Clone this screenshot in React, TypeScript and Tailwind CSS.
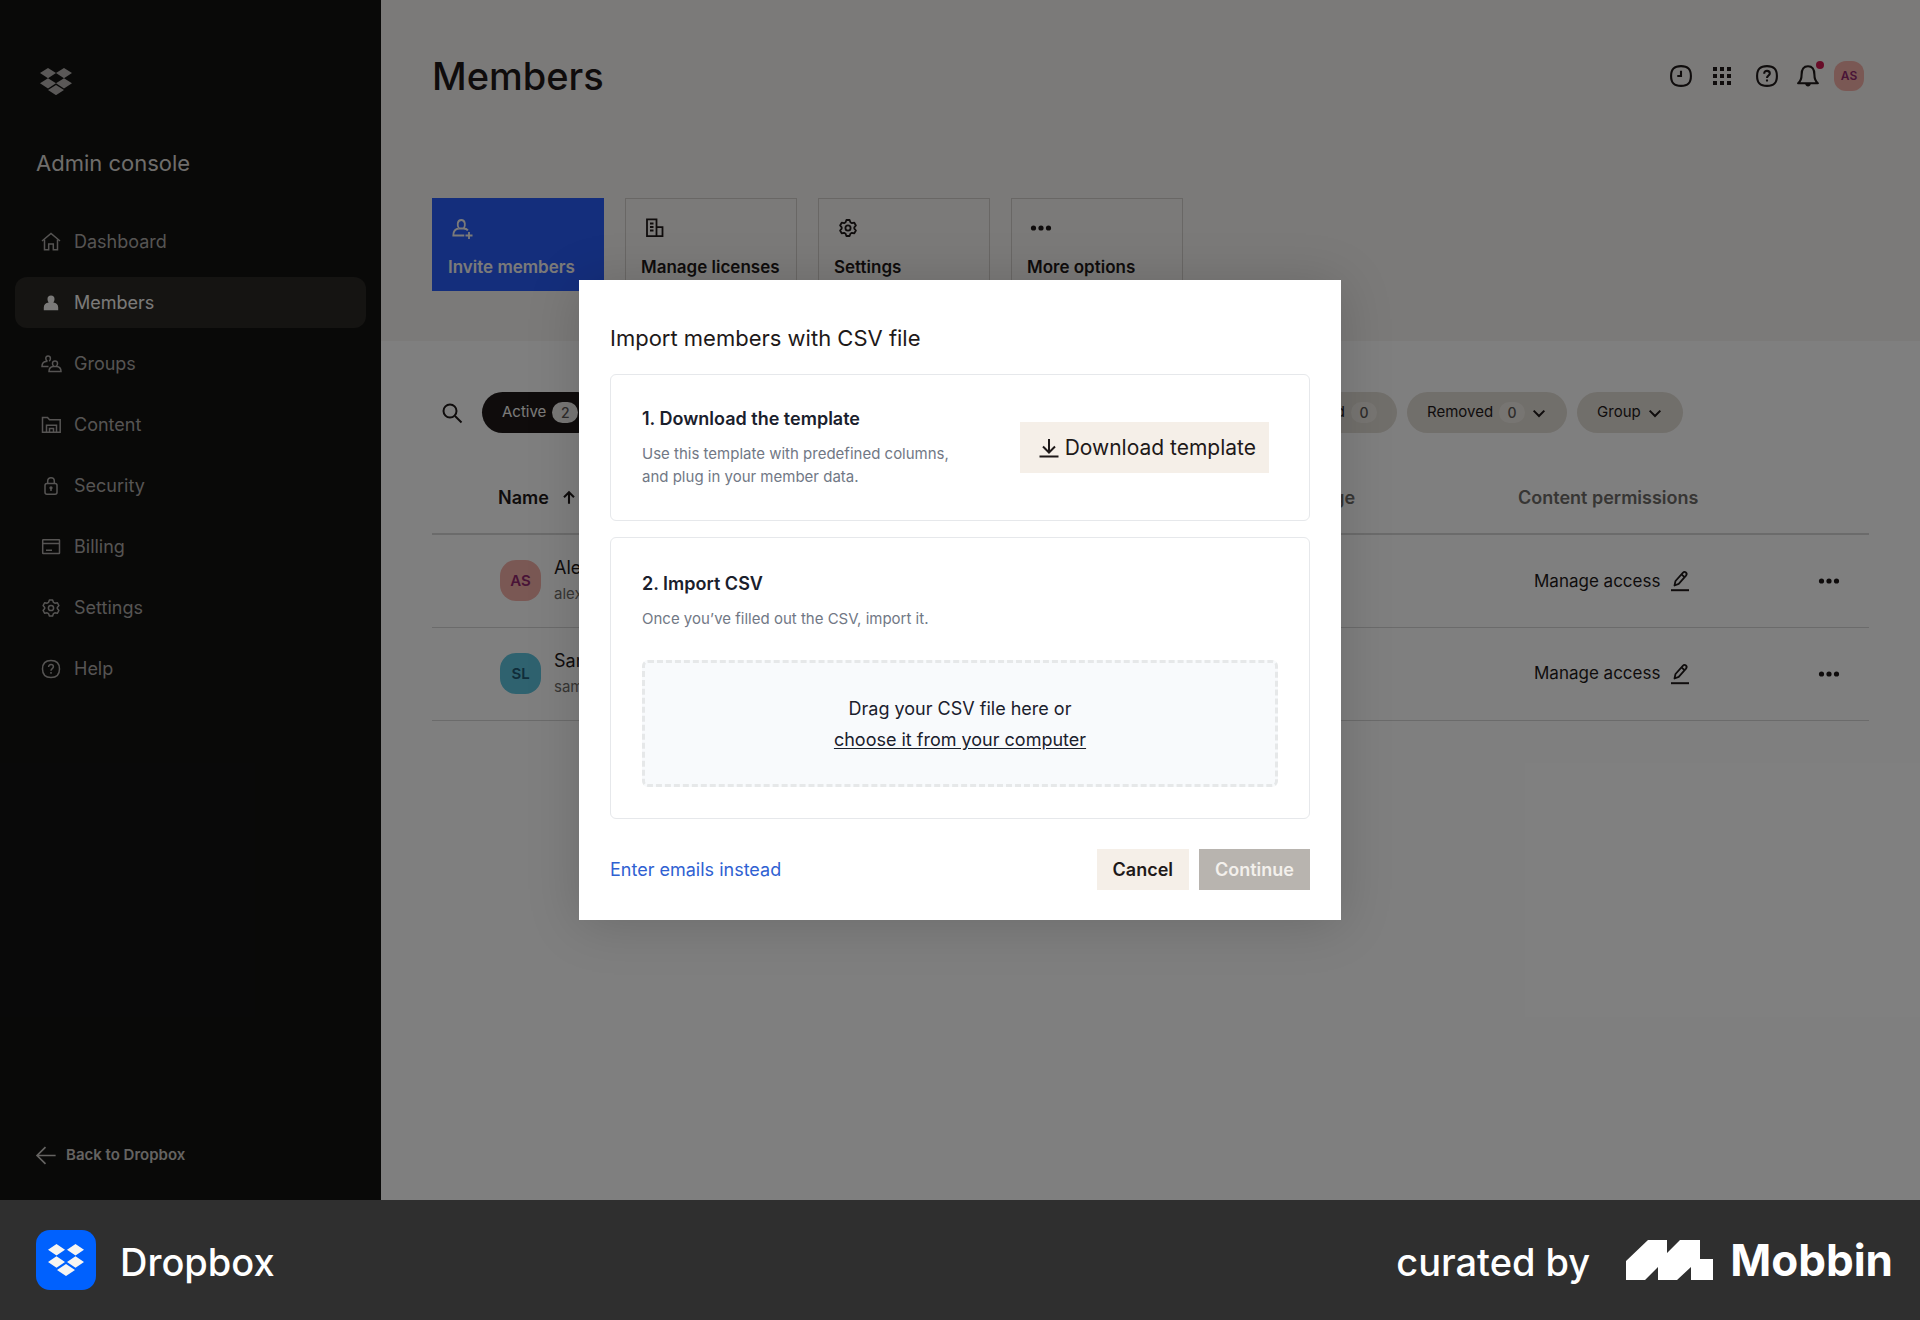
import type { ReactNode } from "react";

function Icon({ children, className = "size-6", sw = 1.5 }: { children: ReactNode; className?: string; sw?: number }) {
  return (
    <svg viewBox="0 0 24 24" className={`shrink-0 ${className}`} fill="none" stroke="currentColor" strokeWidth={sw} aria-hidden="true">
      {children}
    </svg>
  );
}

/* Icon drawings, all on a 24 grid */
const gear = (
  <>
    <circle cx="12" cy="12" r="2.6" />
    <path d="M10.4 4.5h3.2l.8 2.3 1.5.9 2.4-.5 1.6 2.8-1.6 1.9v1.2l1.6 1.9-1.6 2.8-2.4-.5-1.5.9-.8 2.3h-3.2l-.8-2.3-1.5-.9-2.4.5-1.6-2.8 1.6-1.9v-1.2l-1.6-1.9 1.6-2.8 2.4.5 1.5-.9z" strokeLinejoin="round" transform="translate(0 -.5)" />
  </>
);
const help = (
  <>
    <path d="M12 3.5c6 0 8.5 2.5 8.5 8.5s-2.5 8.5-8.5 8.5S3.500 18 3.500 12 6 3.500 12 3.500z" />
    <path d="M9.600 10c0-1.500 1-2.400 2.400-2.400s2.400.9 2.400 2.200c0 1.700-2.400 1.900-2.400 3.900" />
    <path d="M12 15v1.700" />
  </>
);
const dots = (
  <g fill="currentColor" stroke="none">
    <circle cx="4.500" cy="12" r="2.600" />
    <circle cx="12" cy="12" r="2.600" />
    <circle cx="19.500" cy="12" r="2.600" />
  </g>
);
const chevron = <path d="M4 8.500l8 8 8-8" />;
const pencil = (
  <>
    <path d="M6.500 16.500l1-4.500 7.300-8.200c.9-1 2.200-1.100 3.100-.3.900.8.900 2.100.1 3.100L10.700 14.800z" strokeLinejoin="round" />
    <path d="M13.500 5.300l3 2.800" />
    <path d="M3 21.200h18" strokeWidth="2" />
  </>
);

const nav = [
  {
    label: "Dashboard",
    icon: (
      <>
        <path d="M3 11L12 3.500l9 7.500" />
        <path d="M5.500 9.500v10.200h4.200V14h4.600v5.700h4.200V9.500" />
      </>
    ),
  },
  {
    label: "Members",
    icon: (
      <path
        d="M12 4.500c2.300 0 3.500 1.500 3.500 3.500 0 1.500-.5 2.600-1.200 3.500 3 .3 4.900 2.200 4.900 5v2.700H4.800v-2.700c0-2.800 1.900-4.700 4.900-5C9 10.600 8.500 9.500 8.500 8c0-2 1.200-3.500 3.500-3.500z"
        fill="currentColor"
        stroke="none"
      />
    ),
  },
  {
    label: "Groups",
    icon: (
      <>
        <path d="M8.500 9.500C6.500 8.500 5.800 4 9 4s2.800 4 1.200 5.200M9.500 14.500H3c0-3 1.500-5 4.500-5" />
        <path d="M16 9c3.500 0 2.800 4 1.200 5.500h-2.400C13.200 13 12.500 9 16 9zM14.500 14.500c-3 .2-4.500 2-4.500 5h12c0-3-1.500-4.800-4.500-5" />
      </>
    ),
  },
  {
    label: "Content",
    icon: (
      <>
        <path d="M3.500 19.200V4.500h5l2 2.200h10.700v12.500z" />
        <path d="M7.500 19v-6.800h10V19M10.500 19v-3.500h4V19" />
      </>
    ),
  },
  {
    label: "Security",
    icon: (
      <>
        <rect x="6" y="9.500" width="12" height="10.700" rx="2" />
        <path d="M8.700 9.500V7c0-2 1.300-3.200 3.300-3.200s3.300 1.200 3.300 3.200v2.500M12 14v3" />
        <circle cx="12" cy="13.800" r=".9" fill="currentColor" />
      </>
    ),
  },
  {
    label: "Billing",
    icon: (
      <>
        <rect x="3.700" y="4.700" width="16.800" height="13.800" rx=".5" />
        <path d="M3.700 8.500h16.800M7 15.200h6" />
      </>
    ),
  },
  { label: "Settings", icon: gear },
  { label: "Help", icon: help },
];

const actions = [
  {
    label: "Invite members",
    primary: true,
    icon: (
      <>
        <path d="M9 12.500C7 10 7 4 11.300 4s4.300 6 2.300 8.500M9 12.500c-3.500.2-5.700 2.200-5.700 7h11M9 12.500h4.600c2 0 3.400.7 4.300 1.900" />
        <path d="M19 16v7M15.500 19.500h7" />
      </>
    ),
  },
  {
    label: "Manage licenses",
    icon: (
      <>
        <path d="M4 20.200V3.300h9.500v16.900zM13.500 11.200h6v9h-6" />
        <path d="M7 7.500h3.500M7 11h3.500M7 14.500h3.500" />
      </>
    ),
  },
  { label: "Settings", icon: gear },
  { label: "More options", icon: dots },
];

const members = [
  { initials: "AS", name: "Alex Smith", email: "alex@mail.com", tone: "bg-[#f5b0a8] text-[#93286f]" },
  { initials: "SL", name: "Sam Lee", email: "sam@mail.com", tone: "bg-[#5ec4de] text-[#1f5a74]" },
];

function Pill({ label, count, caret, dark }: { label: string; count?: number; caret?: boolean; dark?: boolean }) {
  return (
    <button
      type="button"
      className={`flex h-[41px] items-center rounded-full px-5 text-[15px] ${dark ? "bg-[#1e1919] text-[#f7f5f2]" : "bg-[#e3ded6] text-[#1e1919]"}`}
    >
      {label}
      {count !== undefined && (
        <span
          className={`ml-[6px] flex h-[21px] w-[26px] items-center justify-center rounded-full text-sm font-medium ${
            dark ? "bg-[#f2f0ee] text-[#5c5856]" : "bg-[#efebe5] text-[#5c5856]"
          }`}
        >
          {count}
        </span>
      )}
      {caret && (
        <Icon className="ml-[6px] size-4" sw={3}>
          {chevron}
        </Icon>
      )}
    </button>
  );
}

function Sidebar() {
  return (
    <aside className="flex w-[381px] shrink-0 flex-col bg-[#121211] pb-[33px]">
      <svg viewBox="0 0 24 20.400" className="mt-[68px] ml-10 w-8 text-[#b4b1ae]" fill="currentColor" aria-label="Dropbox">
        <path d="M6 0L0 3.820l6 3.820 6-3.820zM18 0l-6 3.820 6 3.820 6-3.820zM0 11.470l6 3.820 6-3.820-6-3.820zM18 7.650l-6 3.820 6 3.820 6-3.820zM6 16.560l6 3.820 6-3.820-6-3.820z" />
      </svg>
      <h2 className="mt-[54px] ml-9 text-[22px] leading-7 text-[#dedbd7]">Admin console</h2>
      <nav className="mt-[39px] flex flex-col gap-[10px] px-[15px]">
        {nav.map((item) => (
          <a
            key={item.label}
            href="#"
            className={`flex h-[51px] items-center gap-[11px] rounded-xl pl-6 text-lg ${
              item.label === "Members" ? "bg-[#2a2824] text-[#f7f5f2]" : "text-[#aca9a6]"
            }`}
          >
            <Icon>{item.icon}</Icon>
            {item.label}
          </a>
        ))}
      </nav>
      <a href="#" className="mt-auto ml-8 flex h-6 items-center gap-[7px] text-[15px] font-semibold text-[#cac7c3]">
        <Icon className="size-[27px]">
          <path d="M21 12H4.500M12 4.500L4.500 12l7.500 7.500" />
        </Icon>
        Back to Dropbox
      </a>
    </aside>
  );
}

function Header() {
  return (
    <header className="bg-[#f7f5f2] px-[51px] pt-[52px] pb-[50px]">
      <div className="flex h-12 items-center justify-between">
        <h1 className="text-[38px] leading-[48px] font-medium">Members</h1>
        <div className="flex items-center pr-[5px]">
          <button type="button" aria-label="Recent activity" className="mr-[15px]">
            <Icon className="size-[28px]" sw={1.800}>
              <path d="M12 3.500c6 0 8.500 2.500 8.500 8.500s-2.500 8.500-8.500 8.500S3.500 18 3.500 12 6 3.500 12 3.500z" />
              <path d="M12 7.500V12H8.800" />
            </Icon>
          </button>
          <button type="button" aria-label="Apps" className="mr-[19px]">
            <svg viewBox="0 0 24 24" className="size-[24px]" fill="currentColor">
              {[3, 10, 17].flatMap((y) => [3, 10, 17].map((x) => <rect key={`${x}-${y}`} x={x} y={y} width="4" height="4" />))}
            </svg>
          </button>
          <button type="button" aria-label="Help" className="mr-[13px]">
            <Icon className="size-[28px]" sw={1.800}>
              {help}
            </Icon>
          </button>
          <button type="button" aria-label="Notifications" className="relative mr-3">
            <Icon className="size-[28px]" sw={1.800}>
              <path d="M3.500 18.200c2.500-1.800 3-3.700 3-7.200C6.500 6 8 3.700 12 3.700s5.500 2.300 5.500 7.300c0 3.500.5 5.400 3 7.200z" strokeLinejoin="round" />
              <path d="M9.500 18.500h5c-.3 1.700-1.200 2.500-2.500 2.500s-2.200-.8-2.500-2.500z" fill="currentColor" stroke="none" />
            </Icon>
            <span className="absolute -top-[1px] -right-[2px] size-2 rounded-full bg-[#d01850]" />
          </button>
          <button type="button" className="flex size-[30px] items-center justify-center rounded-[12px] bg-[#f5b0a8] text-xs font-semibold text-[#93286f]">
            AS
          </button>
        </div>
      </div>
      <div className="mt-[98px] flex gap-[21px]">
        {actions.map((a) => (
          <button
            key={a.label}
            type="button"
            className={`flex h-[93px] w-[172px] flex-col items-start border px-[15px] pt-[17px] text-[17px] leading-6 font-semibold whitespace-nowrap ${
              a.primary ? "border-[#285cf8] bg-[#285cf8] text-[#f7f5f2]" : "border-[#d2cfcb]"
            }`}
          >
            <Icon className="ml-[2px] size-6" sw={1.800}>
              {a.icon}
            </Icon>
            <span className="mt-[15px]">{a.label}</span>
          </button>
        ))}
      </div>
    </header>
  );
}

function MemberTable() {
  return (
    <table className="mt-[30px] w-full table-fixed text-left text-lg">
      <thead>
        <tr className="h-[71px] border-b-2 border-[#d6d6d6] text-[#6f6c69]">
          <th className="pl-[66px] font-semibold text-[#1e1919]">
            <span className="flex items-center gap-[10px]">
              Name
              <Icon className="size-5" sw={2.500}>
                <path d="M12 19V5M6 11l6-6 6 6" />
              </Icon>
            </span>
          </th>
          <th className="w-[231px] font-semibold">Storage</th>
          <th className="w-[251px] font-semibold">Content permissions</th>
          <th className="w-[100px]">
            <span className="sr-only">Actions</span>
          </th>
        </tr>
      </thead>
      <tbody>
        {members.map((m) => (
          <tr key={m.initials} className="h-[93px] border-b border-[#d6d6d6]">
            <td className="pl-[68px]">
              <div className="flex items-center gap-[13px]">
                <span className={`flex size-[41px] items-center justify-center rounded-[16px] text-[15px] font-semibold ${m.tone}`}>{m.initials}</span>
                <span>
                  <span className="block leading-[26px]">{m.name}</span>
                  <span className="block text-[15px] leading-[26px] text-[#6f6c69]">{m.email}</span>
                </span>
              </div>
            </td>
            <td>0 KB</td>
            <td className="pl-4">
              <button type="button" className="flex items-center gap-2 text-[17px]">
                Manage access
                <Icon className="size-6" sw={1.800}>
                  {pencil}
                </Icon>
              </button>
            </td>
            <td>
              <button type="button" aria-label={`Options for ${m.name}`} className="ml-[48px] flex">
                <Icon>{dots}</Icon>
              </button>
            </td>
          </tr>
        ))}
      </tbody>
    </table>
  );
}

function ImportDialog() {
  return (
    <section
      role="dialog"
      aria-labelledby="import-title"
      className="w-[762px] bg-white px-[31px] pt-[42px] pb-[30px] shadow-[0_4px_50px_rgba(0,0,0,0.16)]"
    >
      <h2 id="import-title" className="text-[22px] leading-8">
        Import members with CSV file
      </h2>

      <div className="mt-5 flex h-[147px] items-center justify-between rounded-md border border-[#e6e8eb] pr-10 pl-[31px]">
        <div>
          <h3 className="text-lg leading-6 font-semibold text-[#1a202c]">1. Download the template</h3>
          <p className="mt-[11px] text-[15px] leading-[23px] text-[#717885]">
            Use this template with predefined columns,
            <br />
            and plug in your member data.
          </p>
        </div>
        <button type="button" className="flex h-[51px] items-center gap-1 bg-[#f5efe8] pr-[13px] pl-[17px] text-[21px]">
          <Icon className="size-6" sw={2}>
            <path d="M12 3v13M6 10.500l6 6 6-6M2.500 20.500h19" />
          </Icon>
          Download template
        </button>
      </div>

      <div className="mt-4 rounded-md border border-[#e6e8eb] px-[31px] pt-[34px] pb-[31px]">
        <h3 className="text-lg leading-6 font-semibold text-[#1a202c]">2. Import CSV</h3>
        <p className="mt-[11px] text-[15px] leading-[23px] text-[#717885]">Once you’ve filled out the CSV, import it.</p>
        <div className="mt-[30px] flex h-[127px] flex-col items-center justify-center rounded-md border-[3px] border-dashed border-[#e6e8e9] bg-[#f8fafc] text-lg leading-[31px] text-[#1a202c]">
          <span>Drag your CSV file here or</span>
          <button type="button" className="underline underline-offset-2">
            choose it from your computer
          </button>
        </div>
      </div>

      <div className="mt-[30px] flex items-center text-lg">
        <a href="#" className="text-[#2f61d2]">
          Enter emails instead
        </a>
        <button type="button" className="ml-auto h-[41px] bg-[#f5efe8] px-4 font-semibold">
          Cancel
        </button>
        <button type="button" disabled className="ml-[10px] h-[41px] bg-[#b8b4af] px-4 font-semibold text-[#f3f0ec]">
          Continue
        </button>
      </div>
    </section>
  );
}

function Footer() {
  return (
    <footer className="flex h-[120px] shrink-0 items-center bg-[#2f2f2f] pr-[27px] pl-9 text-[38px] font-medium text-white">
      <svg viewBox="0 0 60 60" className="size-[60px]" aria-hidden="true">
        <rect width="60" height="60" rx="14" fill="#0061fe" />
        <path
          d="M20.500 14l8.500 5.700-8.500 5.700-8.500-5.700zM39.500 14l8.500 5.700-8.500 5.700-8.500-5.700zM20.500 26.300l8.500 5.700-8.500 5.700-8.500-5.700zM39.500 26.300l8.500 5.700-8.500 5.700-8.500-5.700zM30 34l9 6-9 6-9-6z"
          fill="#f7f5f2"
        />
      </svg>
      <span className="ml-6 pt-1">Dropbox</span>
      <span className="mr-9 ml-auto pt-1">curated by</span>
      <svg viewBox="0 0 87 40" className="h-10 w-[87px]" fill="currentColor" aria-hidden="true">
        <path d="M0 21L22 0h19v13L54 0h20v19h13v21H65V27L51 40H32V27L19 40H0z" />
      </svg>
      <span className="ml-[17px] text-[44px] leading-[48px] font-bold">Mobbin</span>
    </footer>
  );
}

export default function App() {
  return (
    <div className="flex min-h-screen flex-col font-['Inter',sans-serif] text-[#1e1919]">
      <div className="relative flex flex-1">
        <Sidebar />
        <main className="min-w-0 flex-1 bg-white">
          <Header />
          <div className="px-[51px] pt-[51px]">
            <div className="flex items-center gap-[10px]">
              <button type="button" aria-label="Search members" className="mr-2 ml-2">
                <Icon className="size-6" sw={2}>
                  <circle cx="10" cy="10" r="6.500" />
                  <path d="M15 15l6.500 6.500" />
                </Icon>
              </button>
              <div className="flex w-[915px] justify-between">
                <Pill label="Active" count={2} dark />
                <Pill label="Invited" count={0} />
                <Pill label="Suspended" count={0} />
              </div>
              <Pill label="Removed" count={0} caret />
              <Pill label="Group" caret />
            </div>
            <MemberTable />
          </div>
        </main>
        <div className="absolute inset-0 flex items-center justify-center bg-black/50">
          <ImportDialog />
        </div>
      </div>
      <Footer />
    </div>
  );
}
